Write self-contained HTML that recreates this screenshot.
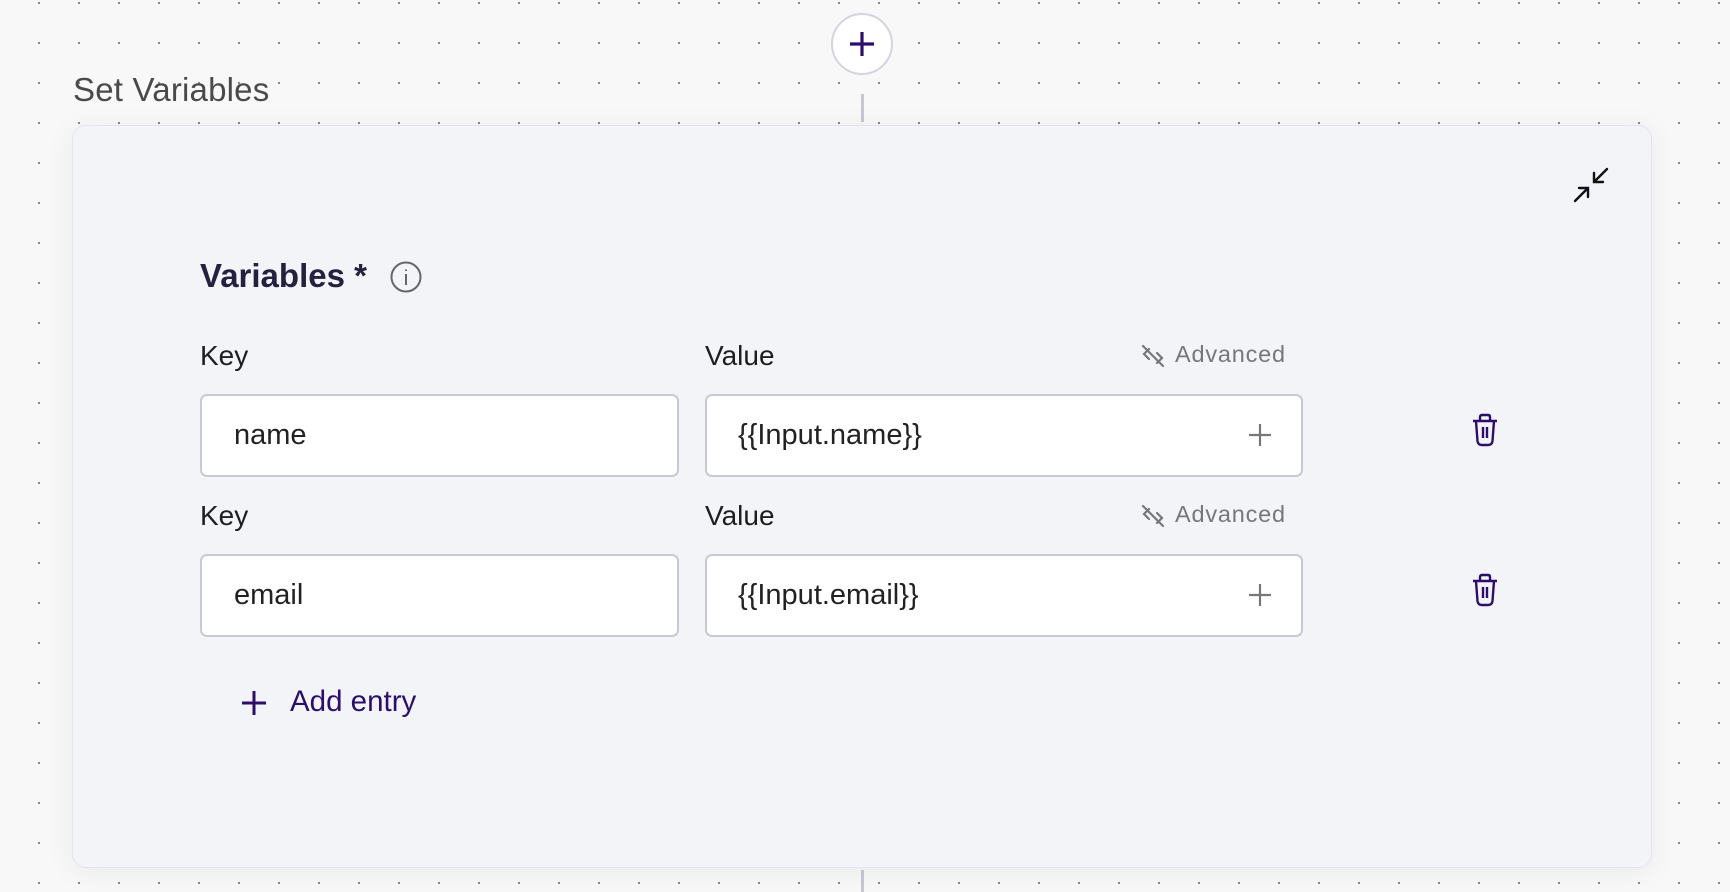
<!DOCTYPE html>
<html><head><meta charset="utf-8"><style>
*{margin:0;padding:0;box-sizing:border-box}
html,body{width:1730px;height:892px;overflow:hidden}
body{background-color:#f8f8f9;background-image:radial-gradient(circle,#8a8a8a 1.1px,transparent 1.3px);background-size:40px 40px;background-position:19px -17px;font-family:"Liberation Sans",sans-serif;position:relative}
.abs{position:absolute}
.card{left:72px;top:125px;width:1580px;height:743px;background:#f3f4f8;border:1.5px solid #e4e4ec;border-radius:14px;box-shadow:0 4px 30px rgba(0,0,0,0.06)}
.title{left:73px;top:71px;font-size:33px;color:#4a4a4a;letter-spacing:0.2px}
.h{font-size:33px;font-weight:bold;color:#23213f;left:200px;top:257px}
.lbl{font-size:28px;color:#1e1e1e}
.box{background:#fff;border:2px solid #c7cad2;border-radius:7px;height:83px}
.txt{font-size:29px;color:#222}
.adv{font-size:23.5px;color:#777;letter-spacing:0.8px}
</style></head><body>
<div class="abs" style="left:862px;top:94px;width:3px;height:28px;background:#c8c8d4;margin-left:-1.5px"></div>
<div class="abs" style="left:862px;top:870px;width:3px;height:22px;background:#c8c8d4;margin-left:-1.5px"></div>
<div class="abs" style="left:831px;top:13px;width:62px;height:62px;border-radius:50%;background:#fff;border:2px solid #d4d4de"></div>
<svg class="abs" style="left:848px;top:30px" width="28" height="28" viewBox="0 0 28 28"><path d="M14 2V26M2 14H26" stroke="#2d0f6b" stroke-width="3.2"/></svg>
<div class="abs title">Set Variables</div>
<div class="abs card"></div>
<svg class="abs" style="left:1573px;top:167px" width="36" height="36" viewBox="0 0 36 36" fill="none" stroke="#111" stroke-width="2.4" stroke-linecap="round"><path d="M2 34L15 21M6 21H15V30"/><path d="M34 2L21 15M21 6V15H30"/></svg>
<div class="abs h">Variables *</div>
<svg class="abs" style="left:390px;top:261px" width="32" height="32" viewBox="0 0 32 32" fill="none" stroke="#666" stroke-width="2"><circle cx="16" cy="16" r="14.5"/><path d="M16 13V24M16 8.5V10"/></svg>

<div class="abs lbl" style="left:200px;top:340px">Key</div>
<div class="abs lbl" style="left:705px;top:340px">Value</div>
<svg class="abs" style="left:1140px;top:343px" width="26" height="26" viewBox="0 0 26 26" fill="none" stroke="#777" stroke-width="2.2" stroke-linecap="round"><path d="M3 3L23 23M9 6L4 11L9 16M17 10L22 15L17 20"/></svg>
<div class="abs adv" style="left:1175px;top:341px">Advanced</div>
<div class="abs box" style="left:200px;top:394px;width:479px"></div>
<div class="abs txt" style="left:234px;top:419px">name</div>
<div class="abs box" style="left:705px;top:394px;width:598px"></div>
<div class="abs txt" style="left:738px;top:419px">{{Input.name}}</div>
<svg class="abs" style="left:1248px;top:423px" width="24" height="24" viewBox="0 0 24 24"><path d="M12 1V23M1 12H23" stroke="#777" stroke-width="2.2"/></svg>
<svg class="abs" style="left:1472px;top:413px" width="26" height="34" viewBox="0 0 26 34" fill="none" stroke="#2d0f6b" stroke-width="2.4" stroke-linejoin="round"><path d="M1 8H25M8 8V4Q8 2 10 2H16Q18 2 18 4V8M4 8L5.5 28Q6 32 10 32H16Q20 32 20.5 28L22 8M11 14V25M15 14V25"/></svg>

<div class="abs lbl" style="left:200px;top:500px">Key</div>
<div class="abs lbl" style="left:705px;top:500px">Value</div>
<svg class="abs" style="left:1140px;top:503px" width="26" height="26" viewBox="0 0 26 26" fill="none" stroke="#777" stroke-width="2.2" stroke-linecap="round"><path d="M3 3L23 23M9 6L4 11L9 16M17 10L22 15L17 20"/></svg>
<div class="abs adv" style="left:1175px;top:501px">Advanced</div>
<div class="abs box" style="left:200px;top:554px;width:479px"></div>
<div class="abs txt" style="left:234px;top:579px">email</div>
<div class="abs box" style="left:705px;top:554px;width:598px"></div>
<div class="abs txt" style="left:738px;top:579px">{{Input.email}}</div>
<svg class="abs" style="left:1248px;top:583px" width="24" height="24" viewBox="0 0 24 24"><path d="M12 1V23M1 12H23" stroke="#777" stroke-width="2.2"/></svg>
<svg class="abs" style="left:1472px;top:573px" width="26" height="34" viewBox="0 0 26 34" fill="none" stroke="#2d0f6b" stroke-width="2.4" stroke-linejoin="round"><path d="M1 8H25M8 8V4Q8 2 10 2H16Q18 2 18 4V8M4 8L5.5 28Q6 32 10 32H16Q20 32 20.5 28L22 8M11 14V25M15 14V25"/></svg>

<svg class="abs" style="left:240px;top:689px" width="28" height="28" viewBox="0 0 28 28"><path d="M14 2V26M2 14H26" stroke="#2d0f6b" stroke-width="3"/></svg>
<div class="abs" style="left:290px;top:685px;font-size:29.5px;color:#2d0f6b">Add entry</div>
</body></html>
